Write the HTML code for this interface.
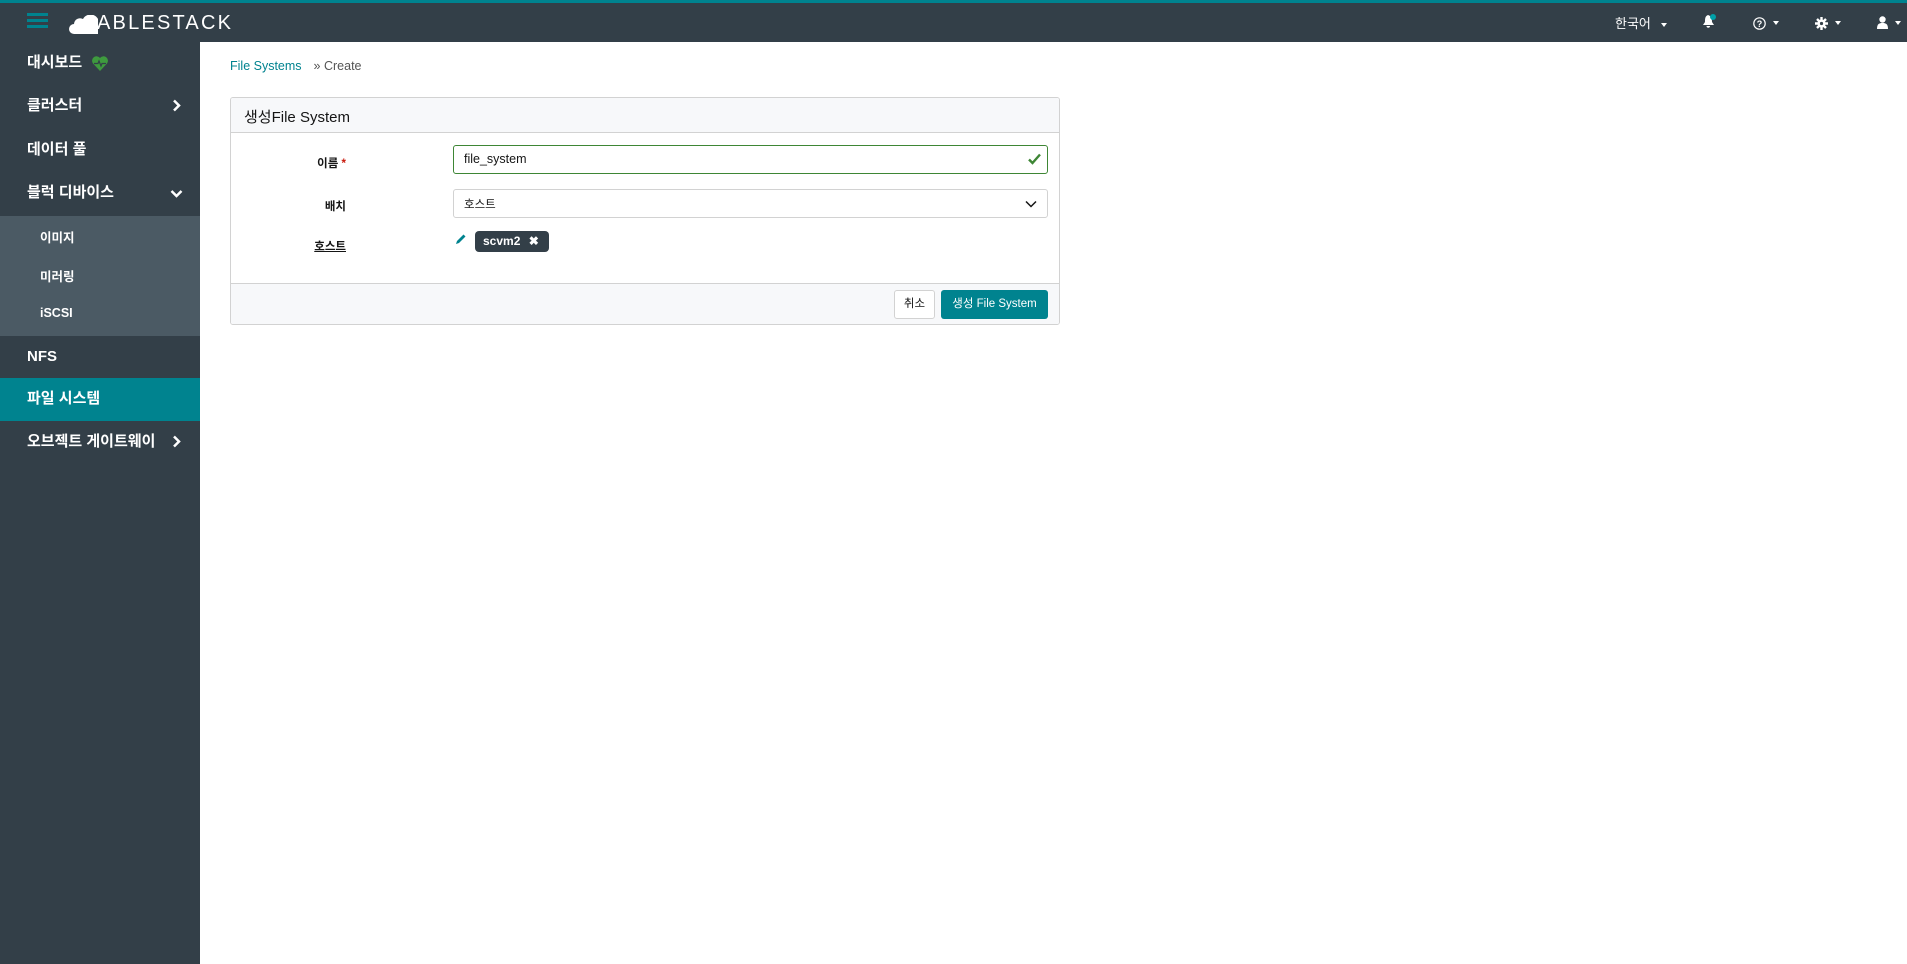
<!DOCTYPE html>
<html><head><meta charset="utf-8"><style>
*{box-sizing:border-box;margin:0;padding:0}
body{width:1907px;height:964px;overflow:hidden;background:#fff;font-family:"Liberation Sans","Noto Sans CJK KR",sans-serif;color:#151515;position:relative}
.top{position:absolute;left:0;top:0;width:1907px;height:42px;background:#333f48;border-top:3px solid #00838f}
.side{position:absolute;left:0;top:42px;width:200px;height:922px;background:#333f48}
.it{position:absolute;left:27px;color:#fff;font-size:15px;font-weight:bold;line-height:20px}
.sub{position:absolute;left:0;top:174px;width:200px;height:120px;background:#4b5a64}
.si{position:absolute;left:40px;color:#fff;font-size:12.5px;font-weight:bold}
.act{position:absolute;left:0;top:336px;width:200px;height:43px;background:#00838f}
.chev{position:absolute;left:172px}
.card{position:absolute;left:230px;top:97px;width:830px;height:228px;border:1px solid #d2d2d2;border-radius:3px;background:#fff;overflow:hidden}
.ch{height:35px;background:#f7f8fa;border-bottom:1px solid #d2d2d2;padding:8px 13px;font-size:15px}
.cf{position:absolute;left:0;top:185px;width:100%;height:43px;background:#f7f8fa;border-top:1px solid #d2d2d2}
.lbl{position:absolute;font-size:11.5px;font-weight:bold;text-align:right}
.inp{position:absolute;left:222px;width:595px;height:29px;border:1px solid #d2d2d2;border-radius:3px;font-size:12.5px;padding:6px 10px}
.w{color:#fff}
.car{display:inline-block;width:0;height:0;border-left:3px solid transparent;border-right:3px solid transparent;border-top:4px solid #fff;vertical-align:middle;margin-left:5px}
</style></head><body>
<div class="top">
 <div style="position:absolute;left:27px;top:10px;width:21px;height:3px;background:#00838f;box-shadow:0 6px 0 #00838f,0 12px 0 #00838f"></div>
 <svg style="position:absolute;left:69px;top:12px" width="29" height="19" viewBox="0 0 29 19"><path d="M5 19 A5 5 0 0 1 5 9 A6 6 0 0 1 14 4 A8 8 0 0 1 29 12 L29 19 Z" fill="#fff"/></svg>
 <div style="position:absolute;left:97px;top:9px;color:#fff;font-size:20px;letter-spacing:2.2px;font-weight:normal">ABLESTACK</div>
 <div class="w" style="position:absolute;left:1615px;top:10px;font-size:13px">한국어<span class="car" style="margin-left:10px"></span></div>
 <svg style="position:absolute;left:1701px;top:10px" width="16" height="16" viewBox="0 0 16 16"><path d="M7 2 C4 3 4 6 4 9 L2 12 H13 L11 9 C11 6 10.5 3 7 2Z M5.5 13 H9 A1.7 1.7 0 0 1 5.5 13Z" fill="#fff"/><circle cx="12" cy="4" r="3" fill="#00a0a8"/></svg>
 <svg style="position:absolute;left:1753px;top:14px" width="13" height="13" viewBox="0 0 13 13"><circle cx="6.5" cy="6.5" r="5.7" fill="none" stroke="#fff" stroke-width="1.2"/><text x="6.5" y="10" font-size="9" font-weight="bold" fill="#fff" text-anchor="middle" font-family="Liberation Sans">?</text></svg>
 <span class="car" style="position:absolute;left:1768px;top:18px"></span>
 <svg style="position:absolute;left:1815px;top:14px" width="13" height="13" viewBox="0 0 13 13"><circle cx="6.5" cy="6.5" r="4" fill="#fff"/><g stroke="#fff" stroke-width="2.4"><path d="M6.5 0V13M0 6.5H13M2 2L11 11M11 2L2 11"/></g><circle cx="6.5" cy="6.5" r="1.6" fill="#333f48"/></svg>
 <span class="car" style="position:absolute;left:1830px;top:18px"></span>
 <svg style="position:absolute;left:1877px;top:13px" width="11" height="13" viewBox="0 0 11 13"><circle cx="5.5" cy="3.5" r="3.2" fill="#fff"/><path d="M0 13 C0 8 2 7 5.5 7 C9 7 11 8 11 13Z" fill="#fff"/></svg>
 <span class="car" style="position:absolute;left:1890px;top:18px"></span>
</div>
<div class="side">
 <div class="it" style="top:11px">대시보드</div>
 <svg style="position:absolute;left:92px;top:14px" width="16" height="15" viewBox="0 0 16 15"><path d="M8 15 L1 7.5 A4 4 0 0 1 8 2 A4 4 0 0 1 15 7.5Z" fill="#3e9a3e"/><path d="M2 7.5 H6 L7 5 L9 10 L10 7.5 H14" stroke="#333f48" stroke-width="1.2" fill="none"/></svg>
 <div class="it" style="top:54px">클러스터</div><svg class="chev" style="top:57px" width="9" height="13" viewBox="0 0 9 13"><path d="M2 1.5 L7 6.5 L2 11.5" stroke="#fff" stroke-width="2.5" fill="none"/></svg>
 <div class="it" style="top:98px">데이터 풀</div>
 <div class="it" style="top:141px">블럭 디바이스</div><svg class="chev" style="top:147px;left:170px" width="13" height="9" viewBox="0 0 13 9"><path d="M1.5 2 L6.5 7 L11.5 2" stroke="#fff" stroke-width="2.5" fill="none"/></svg>
 <div class="sub"></div>
 <div class="si" style="top:185px">이미지</div>
 <div class="si" style="top:224px">미러링</div>
 <div class="si" style="top:264px">iSCSI</div>
 <div class="it" style="top:305px">NFS</div>
 <div class="act"></div>
 <div class="it" style="top:347px">파일 시스템</div>
 <div class="it" style="top:390px">오브젝트 게이트웨이</div><svg class="chev" style="top:393px" width="9" height="13" viewBox="0 0 9 13"><path d="M2 1.5 L7 6.5 L2 11.5" stroke="#fff" stroke-width="2.5" fill="none"/></svg>
</div>
<div style="position:absolute;left:230px;top:59px;font-size:12.5px"><span style="color:#00838f">File Systems</span><span style="color:#555;margin-left:12px">» Create</span></div>
<div class="card">
 <div class="ch">생성File System</div>
 <div class="lbl" style="right:713px;top:57px">이름 <span style="color:#c9190b">*</span></div>
 <div class="inp" style="top:47px;border-color:#3e8635;border-width:1.5px">file_system<svg style="position:absolute;right:6px;top:7px" width="13" height="12" viewBox="0 0 13 12"><path d="M1 6.5 L4.5 10 L12 1.5" stroke="#3e8635" stroke-width="2.4" fill="none"/></svg></div>
 <div class="lbl" style="right:713px;top:100px">배치</div>
 <div class="inp" style="top:91px;font-size:11.5px">호스트<svg style="position:absolute;right:10px;top:10px" width="12" height="8" viewBox="0 0 12 8"><path d="M1 1.5 L6 6.5 L11 1.5" stroke="#151515" stroke-width="1.5" fill="none"/></svg></div>
 <div class="lbl" style="right:713px;top:140px;text-decoration:underline">호스트</div>
 <svg style="position:absolute;left:224px;top:135px" width="12" height="12" viewBox="0 0 12 12"><path d="M1 11 L2 8 L8.5 1.5 L10.5 3.5 L4 10Z" fill="#00838f"/></svg>
 <div style="position:absolute;left:244px;top:133px;width:74px;height:21px;background:#333f48;border-radius:4px;color:#fff;font-size:12px;font-weight:bold;padding:3px 8px">scvm2 <span style="margin-left:5px">✖</span></div>
 <div class="cf">
  <div style="position:absolute;left:663px;top:6px;width:41px;height:29px;border:1px solid #d2d2d2;border-radius:3px;background:#fff;font-size:11.5px;text-align:center;line-height:27px">취소</div>
  <div style="position:absolute;left:710px;top:6px;width:107px;height:29px;border-radius:3px;background:#00838f;color:#fff;font-size:11.5px;text-align:center;line-height:29px">생성 File System</div>
 </div>
</div>
</body></html>
